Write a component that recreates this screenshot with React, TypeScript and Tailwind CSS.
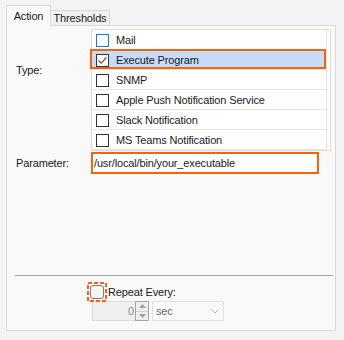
import React from "react";

const items = [
  "Mail",
  "Execute Program",
  "SNMP",
  "Apple Push Notification Service",
  "Slack Notification",
  "MS Teams Notification",
];

function Box({ checked, blue }: { checked?: boolean; blue?: boolean }) {
  return (
    <div
      className={
        "w-[13px] h-[13px] border bg-white flex items-center justify-center " +
        (blue ? "border-[#1e78d2]" : "border-[#333333]")
      }
    >
      {checked && (
        <svg width="11" height="11" viewBox="0 0 11 11">
          <polyline points="1.5,5.5 4.2,8.2 9.5,2.5" fill="none" stroke="#555" strokeWidth="1.2" />
        </svg>
      )}
    </div>
  );
}

export default function App() {
  return (
    <div className="w-[344px] h-[340px] bg-[#f3f3f3] pt-[5px] pl-[6px] text-[11px] text-[#1a1a1a] font-['Liberation_Sans',Arial,sans-serif] tracking-[-0.15px]">
      <div className="flex items-end h-[20px] relative z-10">
        <div className="h-[21px] -mb-px w-[45px] border border-b-0 border-[#d9d9d9] bg-[#f9f9f9] flex items-center justify-center">
          Action
        </div>
        <div className="h-[15px] w-[59px] border border-l-0 border-b-0 border-[#d9d9d9] bg-[#f0f0f0] flex items-center justify-center pt-px">
          Thresholds
        </div>
      </div>
      <div className="w-[330px] h-[306px] border border-[#d9d9d9] bg-[#f9f9f9] flex flex-col">
        <div className="flex pt-[3px]">
          <div className="w-[84px] pl-[9px] pt-[33px]">Type:</div>
          <div className="w-[240px] border border-[#e0ded4] bg-white pr-[3px]">
            {items.map((t, i) => (
              <div
                key={t}
                className={
                  "relative h-[20px] border-b border-r border-[#e8e6dd] flex items-center pl-[4px] gap-[7px] pt-px " +
                  (i === 1 ? "bg-[#c5dcf7]" : "")
                }
              >
                <Box checked={i === 1} blue={i === 0} />
                <span>{t}</span>
                {i === 1 && (
                  <div className="absolute -left-[2px] -top-[1px] right-0 bottom-0 border-2 border-[#f7630c]" />
                )}
              </div>
            ))}
          </div>
        </div>
        <div className="flex items-center mt-px">
          <div className="w-[84px] pl-[9px]">Parameter:</div>
          <div className="w-[228px] h-[22px] border-2 border-[#f7630c] bg-white flex items-center pl-[1px]">
            /usr/local/bin/your_executable
          </div>
        </div>
        <div className="flex-1" />
        <div className="ml-[8px] mr-[2px] h-px bg-[#a0a0a0]" />
        <div className="flex items-center ml-[80px] mt-[6px]">
          <div className="relative w-[20px] h-[20px] flex items-center justify-center">
            <svg className="absolute inset-0" width="20" height="20" viewBox="0 0 20 20">
              <rect x="1" y="1" width="18" height="18" fill="none" stroke="#f7630c" strokeWidth="2" strokeDasharray="4 2" />
            </svg>
            <div className="w-[14px] h-[14px] rounded-[3px] border border-[#7a7a7a] bg-[#f6f6f6]" />
          </div>
          <span className="ml-px">Repeat Every:</span>
        </div>
        <div className="flex ml-[85px] -mt-px pb-[9px]">
          <div className="w-[43px] h-[20px] border border-r-0 border-[#dcdcdc] bg-[#f0f0f0] flex items-center justify-end pr-[1px] text-[#8a8a8a]">
            0
          </div>
          <div className="w-[14px] h-[20px] border border-[#a6a6a6] bg-[#eeeeee] flex flex-col">
            <div className="flex-1 flex items-center justify-center border-b border-[#d0d0d0]">
              <svg width="7" height="4" viewBox="0 0 7 4">
                <polygon points="0,4 3.5,0 7,4" fill="#a0a0a0" />
              </svg>
            </div>
            <div className="flex-1 flex items-center justify-center">
              <svg width="7" height="4" viewBox="0 0 7 4">
                <polygon points="0,0 3.5,4 7,0" fill="#a0a0a0" />
              </svg>
            </div>
          </div>
          <div className="ml-[3px] w-[72px] h-[20px] border border-[#e1e1e1] bg-[#f9f9f9] flex items-center pl-[3px] pr-[4px] text-[#6d6d6d]">
            <span className="flex-1">sec</span>
            <svg width="8" height="5" viewBox="0 0 8 5">
              <polyline points="0.5,0.5 4,4 7.5,0.5" fill="none" stroke="#b5b5b5" strokeWidth="1" />
            </svg>
          </div>
        </div>
      </div>
    </div>
  );
}
